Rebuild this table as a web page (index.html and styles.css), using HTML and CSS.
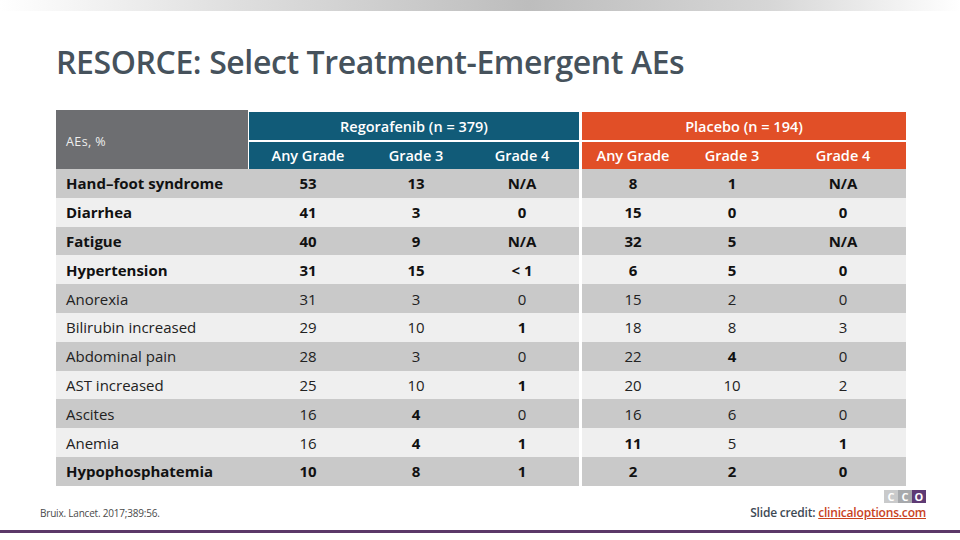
FILE: index.html
```html
<!DOCTYPE html>
<html>
<head>
<meta charset="utf-8">
<link rel="stylesheet" href="styles.css">
</head>
<body>
<div class="slide">
  <div class="topbar"></div>
  <h1 class="title">RESORCE: Select Treatment-Emergent AEs</h1>
  <div class="table">
    <div class="corner">AEs, %</div>
    <div class="gtitle reg">Regorafenib (n = 379)</div>
    <div class="gtitle pla">Placebo (n = 194)</div>
    <div class="sub reg">Any Grade</div>
    <div class="sub reg">Grade 3</div>
    <div class="sub reg sep">Grade 4</div>
    <div class="sub pla">Any Grade</div>
    <div class="sub pla">Grade 3</div>
    <div class="sub pla">Grade 4</div>

    <div class="row dark b"><div class="lbl">Hand–foot syndrome</div><div>53</div><div>13</div><div class="sep">N/A</div><div>8</div><div>1</div><div>N/A</div></div>
    <div class="row light b"><div class="lbl">Diarrhea</div><div>41</div><div>3</div><div class="sep">0</div><div>15</div><div>0</div><div>0</div></div>
    <div class="row dark b"><div class="lbl">Fatigue</div><div>40</div><div>9</div><div class="sep">N/A</div><div>32</div><div>5</div><div>N/A</div></div>
    <div class="row light b"><div class="lbl">Hypertension</div><div>31</div><div>15</div><div class="sep">&lt; 1</div><div>6</div><div>5</div><div>0</div></div>
    <div class="row dark"><div class="lbl">Anorexia</div><div>31</div><div>3</div><div class="sep">0</div><div>15</div><div>2</div><div>0</div></div>
    <div class="row light"><div class="lbl">Bilirubin increased</div><div>29</div><div>10</div><div class="sep b">1</div><div>18</div><div>8</div><div>3</div></div>
    <div class="row dark"><div class="lbl">Abdominal pain</div><div>28</div><div>3</div><div class="sep">0</div><div>22</div><div class="b">4</div><div>0</div></div>
    <div class="row light"><div class="lbl">AST increased</div><div>25</div><div>10</div><div class="sep b">1</div><div>20</div><div>10</div><div>2</div></div>
    <div class="row dark"><div class="lbl">Ascites</div><div>16</div><div class="b">4</div><div class="sep">0</div><div>16</div><div>6</div><div>0</div></div>
    <div class="row light"><div class="lbl">Anemia</div><div>16</div><div class="b">4</div><div class="sep b">1</div><div class="b">11</div><div>5</div><div class="b">1</div></div>
    <div class="row dark b"><div class="lbl">Hypophosphatemia</div><div>10</div><div>8</div><div class="sep">1</div><div>2</div><div>2</div><div>0</div></div>
  </div>
  <div class="footer">
    <div class="cite">Bruix. Lancet. 2017;389:56.</div>
    <div class="credit-wrap">
      <div class="logo"><span class="l1">C</span><span class="l2">C</span><span class="l3">O</span></div>
      <div class="credit">Slide credit: <a class="link">clinicaloptions.com</a></div>
    </div>
  </div>
  <div class="bottombar"></div>
</div>
</body>
</html>
```
FILE: styles.css
```css
html, body {
  margin: 0;
  padding: 0;
  background: #fff;
}
.slide {
  width: 960px;
  height: 540px;
  overflow: hidden;
  font-family: "Open Sans", "Liberation Sans", sans-serif;
  display: flex;
  flex-direction: column;
}
.topbar {
  height: 11px;
  background: linear-gradient(to right, #ffffff 0%, #dedede 25%, #bdbdbd 55%, #d6d6d6 80%, #ffffff 100%);
}
.title {
  margin: 33px 0 0 56px;
  height: 36px;
  line-height: 36px;
  font-size: 32px;
  font-weight: 600;
  letter-spacing: -0.4px;
  color: #46525c;
}
.table {
  margin: 30px 0 0 56px;
  display: grid;
  grid-template-columns: 193px 118px 98px 117px 102px 96px 126px;
  grid-template-rows: 30px 29px repeat(11, 28.8px);
  width: 850px;
  font-size: 15px;
  color: #1a1a1a;
}
.row {
  display: contents;
}
.table > div:not(.row), .row > div {
  display: flex;
  align-items: center;
  justify-content: center;
  box-sizing: border-box;
}
.corner {
  grid-row: 1 / 3;
  grid-column: 1;
  background: #6d6e71;
  color: #eeeeee;
  font-size: 12.5px;
  letter-spacing: 0.4px;
  justify-content: flex-start !important;
  padding-left: 10px;
  padding-top: 3px;
  border-right: 1px solid #fff;
}
.gtitle {
  margin-top: 2px;
  color: #fff;
  font-weight: 600;
  font-size: 14.5px;
}
.gtitle.reg {
  grid-column: 2 / 5;
  background: #115b78;
  border-right: 3px solid #fff;
}
.gtitle.pla {
  grid-column: 5 / 8;
  background: #e14f27;
}
.sub {
  color: #fff;
  font-weight: 600;
  font-size: 14.5px;
  border-top: 2px solid #fff;
}
.sub.reg {
  background: #115b78;
}
.sub.pla {
  background: #e14f27;
}
.sep {
  border-right: 3px solid #fff;
}
.row.dark > div {
  background: #c9c9c9;
}
.row.light > div {
  background: #efefef;
}
.row > div {
  font-weight: 400;
  color: #222;
}
.row.b > div, .row > div.b {
  font-weight: 700;
  color: #111;
}
.row > .lbl {
  justify-content: flex-start !important;
  padding-left: 10px;
}
.footer {
  flex: 1;
  display: flex;
  justify-content: space-between;
  align-items: flex-end;
  padding: 0 34px 10px 40px;
}
.cite {
  font-size: 10px;
  color: #4a4a4a;
  letter-spacing: -0.2px;
  line-height: 14px;
}
.credit-wrap {
  display: flex;
  flex-direction: column;
  align-items: flex-end;
  gap: 3px;
}
.logo {
  display: flex;
}
.logo span {
  width: 14px;
  height: 13px;
  display: flex;
  align-items: center;
  justify-content: center;
  color: #fff;
  font-size: 11px;
  font-weight: 700;
  line-height: 13px;
}
.logo .l1 { background: #c9cacb; }
.logo .l2 { background: #a7a9ac; }
.logo .l3 { background: #5e3a74; }
.credit {
  font-size: 12px;
  line-height: 14px;
  font-weight: 600;
  color: #3e4a55;
  letter-spacing: -0.2px;
}
.link {
  color: #c9421d;
  text-decoration: underline;
}
.bottombar {
  height: 3px;
  background: #5b3868;
  margin-bottom: 7px;
}
```
